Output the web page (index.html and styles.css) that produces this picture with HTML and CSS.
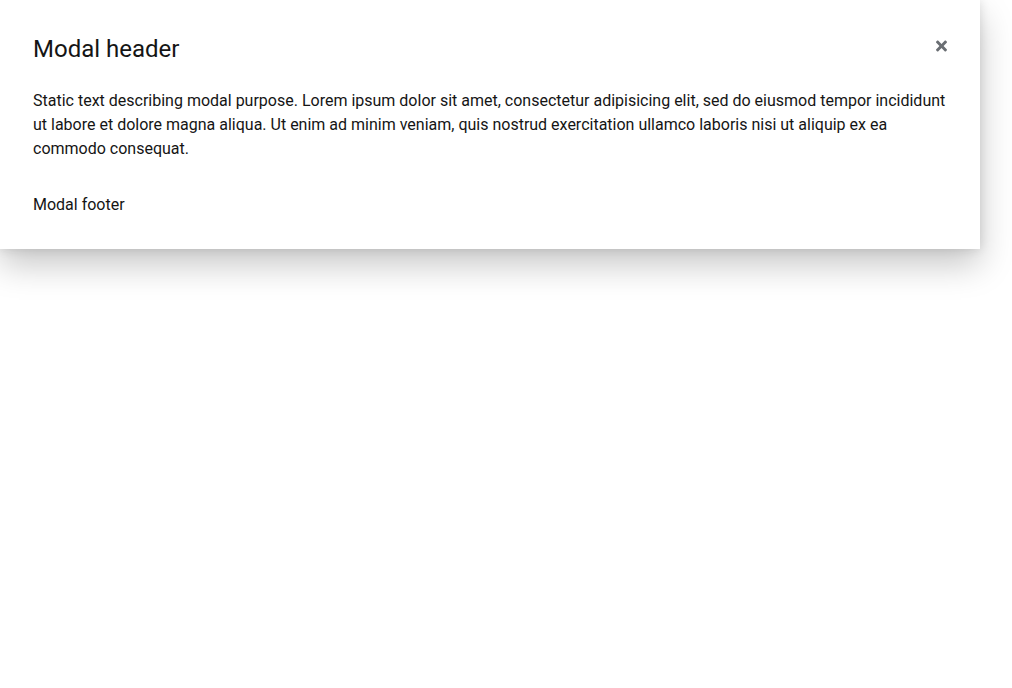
FILE: index.html
```html
<!DOCTYPE html>
<html lang="en">
<head>
<meta charset="utf-8">
<title>Modal</title>
<link rel="stylesheet" href="styles.css">
</head>
<body>
<div class="page">
  <div class="modal-box" role="dialog" aria-labelledby="modal-title">
    <button class="modal-close" type="button" aria-label="Close">
      <svg viewBox="0 0 352 512" width="11" height="16" aria-hidden="true"><path d="M242.72 256l100.07-100.07c12.28-12.28 12.28-32.19 0-44.480l-22.24-22.24c-12.28-12.28-32.19-12.28-44.48 0L176 189.28 75.93 89.21c-12.28-12.28-32.19-12.28-44.48 0L9.21 111.45c-12.28 12.28-12.28 32.19 0 44.48L109.28 256 9.21 356.07c-12.28 12.28-12.28 32.19 0 44.48l22.24 22.24c12.28 12.28 32.2 12.28 44.48 0L176 322.72l100.07 100.07c12.28 12.28 32.2 12.28 44.48 0l22.24-22.24c12.28-12.28 12.28-32.19 0-44.48L242.72 256z"/></svg>
    </button>
    <h1 class="modal-title" id="modal-title">Modal header</h1>
    <div class="modal-body">Static text describing modal purpose. Lorem ipsum dolor sit amet, consectetur adipisicing elit, sed do eiusmod tempor incididunt ut labore et dolore magna aliqua. Ut enim ad minim veniam, quis nostrud exercitation ullamco laboris nisi ut aliquip ex ea commodo consequat.</div>
    <footer class="modal-footer">Modal footer</footer>
  </div>
</div>
</body>
</html>
```
FILE: styles.css
```css
html, body {
  margin: 0;
  padding: 0;
  background: #ffffff;
}
body {
  font-family: Roboto, "Liberation Sans", sans-serif;
  color: #151515;
  font-size: 16px;
  line-height: 24px;
}
.page {
  min-height: 688px;
}
.modal-box {
  position: relative;
  width: 980px;
  box-sizing: border-box;
  padding: 33px 32px 32px 33px;
  background: #fff;
  box-shadow: 0 16px 32px 0 rgba(3, 3, 3, 0.22), 0 0 10px 0 rgba(3, 3, 3, 0.12);
}
.modal-close {
  position: absolute;
  top: 30px;
  right: 21px;
  width: 36px;
  height: 32px;
  padding: 0;
  border: 0;
  background: transparent;
  display: flex;
  align-items: center;
  justify-content: center;
  fill: #6a6e73;
  cursor: pointer;
}
.modal-title {
  margin: 0;
  font-size: 24px;
  font-weight: 400;
  line-height: 32px;
}
.modal-body {
  margin-top: 24px;
}
.modal-footer {
  margin-top: 32px;
}
```
